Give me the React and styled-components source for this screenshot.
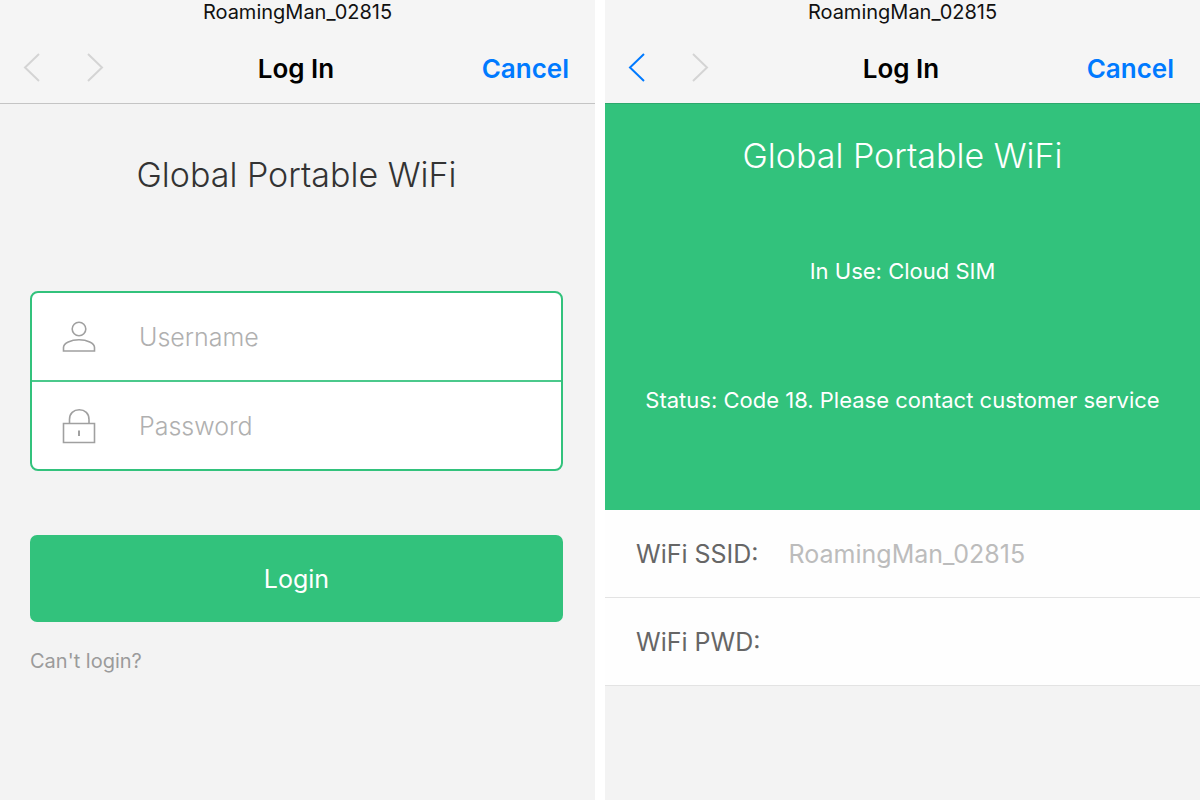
import React from 'react';
import styled, { createGlobalStyle } from 'styled-components';

const GlobalStyle = createGlobalStyle`
  * {
    box-sizing: border-box;
  }

  body {
    margin: 0;
    background-color: #ffffff;
    font-family: Inter, "Liberation Sans", sans-serif;
  }
`;

const Screens = styled.div`
  display: grid;
  grid-template-columns: repeat(2, minmax(0, 1fr));
  gap: 10px;
  min-height: 100vh;
`;

const Screen = styled.section`
  display: flex;
  flex-direction: column;
  background-color: #f3f3f3;
`;

const Header = styled.header`
  background-color: #f5f5f5;
  border-bottom: 1px solid ${({ $line }) => $line};
`;

const NetworkName = styled.div`
  font-size: 20px;
  line-height: 24px;
  padding-bottom: 9px;
  text-align: center;
  color: #111111;
`;

const NavBar = styled.nav`
  display: grid;
  grid-template-columns: 1fr auto 1fr;
  align-items: center;
  height: 70px;
  padding: 0 26px 0 23px;
`;

const Arrows = styled.div`
  display: flex;
  gap: 45px;
`;

const ArrowButton = styled.button`
  display: flex;
  padding: 0;
  border: none;
  background: none;
  color: ${({ $active }) => ($active ? '#007aff' : '#d4d4d4')};
`;

const NavTitle = styled.h1`
  margin: 0;
  padding-top: 2px;
  font-size: 26px;
  font-weight: 600;
  line-height: 32px;
  color: #000000;
`;

const CancelButton = styled.button`
  justify-self: end;
  padding: 2px 0 0;
  border: none;
  background: none;
  font-family: inherit;
  font-size: 26px;
  font-weight: 600;
  line-height: 32px;
  color: #007aff;
`;

const LoginForm = styled.form`
  display: flex;
  flex-direction: column;
  padding: 50px 32px 0 30px;
`;

const Title = styled.h2`
  margin: 0;
  font-size: 34px;
  font-weight: 300;
  line-height: 42px;
  text-align: center;
  color: ${({ $color }) => $color};
`;

const FieldGroup = styled.div`
  margin-top: 95px;
  border: 2px solid #32c27c;
  border-radius: 8px;
  background-color: #ffffff;
  overflow: hidden;
`;

const Field = styled.label`
  display: flex;
  align-items: center;
  gap: 43px;
  height: 87px;
  padding: 0 30px;
  color: #a0a0a0;

  & + & {
    height: 89px;
    border-top: 2px solid #4bc98c;
  }
`;

const FieldInput = styled.input`
  flex: 1;
  min-width: 0;
  padding: 0;
  border: none;
  outline: none;
  background: none;
  font-family: inherit;
  font-size: 25px;
  font-weight: 300;
  line-height: 32px;
  color: #333333;

  &::placeholder {
    color: #b0b0b0;
    opacity: 1;
  }
`;

const LoginButton = styled.button`
  height: 87px;
  margin-top: 64px;
  border: none;
  border-radius: 7px;
  background-color: #32c27c;
  font-family: inherit;
  font-size: 25px;
  font-weight: 400;
  color: #ffffff;
`;

const HelpLink = styled.a`
  align-self: flex-start;
  margin-top: 26px;
  font-size: 20px;
  font-weight: 400;
  line-height: 26px;
  color: #9b9b9b;
  text-decoration: none;
`;

const StatusPanel = styled.div`
  display: flex;
  flex-direction: column;
  align-items: center;
  height: 406px;
  padding: 31px 20px 0;
  background-color: #32c27c;
`;

const StatusText = styled.p`
  margin: ${({ $top }) => $top}px 0 0;
  font-size: 22px;
  font-weight: 400;
  line-height: 28px;
  text-align: center;
  color: #ffffff;
`;

const DetailRow = styled.label`
  display: flex;
  align-items: center;
  gap: 30px;
  height: 88px;
  padding: 0 31px;
  border-bottom: 1px solid #e3e3e3;
  background-color: #fefefe;
  font-size: 25px;
  font-weight: 400;
  line-height: 32px;
  color: #666666;
`;

const DetailInput = styled(FieldInput)`
  font-weight: 400;

  &::placeholder {
    color: #bcbcbc;
  }
`;

const ChevronLeft = () => (
  <svg width="18" height="30" viewBox="0 0 18 30" fill="none" stroke="currentColor" strokeWidth="2">
    <path d="M16 1 L2 14.5 L16 28" />
  </svg>
);

const ChevronRight = () => (
  <svg width="18" height="30" viewBox="0 0 18 30" fill="none" stroke="currentColor" strokeWidth="2">
    <path d="M2 1 L16 14.5 L2 28" />
  </svg>
);

const UserIcon = () => (
  <svg width="34" height="36" viewBox="0 0 34 36" fill="none" stroke="currentColor" strokeWidth="1.6">
    <circle cx="17" cy="10" r="6.8" />
    <path d="M1.5 32 V28.5 C1.5 24 9 20.8 17 20.8 C25 20.8 32.5 24 32.5 28.5 V32 Z" />
  </svg>
);

const LockIcon = () => (
  <svg width="34" height="36" viewBox="0 0 34 36" fill="none" stroke="currentColor" strokeWidth="1.6">
    <path d="M7.5 15.5 V11.5 C7.5 5.5 11.5 1.8 17.3 1.8 C23 1.8 27 5.5 27 11.5 V15.5" />
    <path d="M1.5 15.5 H32.5 V34.5 H1.5 Z" />
    <path d="M17 22.5 V28" strokeWidth="2" />
  </svg>
);

const ScreenHeader = ({ canGoBack, line }) => (
  <Header $line={line}>
    <NetworkName>RoamingMan_02815</NetworkName>
    <NavBar>
      <Arrows>
        <ArrowButton type="button" aria-label="Back" $active={canGoBack} disabled={!canGoBack}>
          <ChevronLeft />
        </ArrowButton>
        <ArrowButton type="button" aria-label="Forward" disabled>
          <ChevronRight />
        </ArrowButton>
      </Arrows>
      <NavTitle>Log In</NavTitle>
      <CancelButton type="button">Cancel</CancelButton>
    </NavBar>
  </Header>
);

const LoginScreen = () => (
  <Screen>
    <ScreenHeader line="#c4c4c4" />
    <LoginForm onSubmit={(e) => e.preventDefault()}>
      <Title $color="#333333">Global Portable WiFi</Title>
      <FieldGroup>
        <Field>
          <UserIcon />
          <FieldInput type="text" aria-label="Username" placeholder="Username" />
        </Field>
        <Field>
          <LockIcon />
          <FieldInput type="password" aria-label="Password" placeholder="Password" />
        </Field>
      </FieldGroup>
      <LoginButton type="submit">Login</LoginButton>
      <HelpLink href="#help">Can't login?</HelpLink>
    </LoginForm>
  </Screen>
);

const StatusScreen = () => (
  <Screen>
    <ScreenHeader canGoBack line="#2ca86c" />
    <StatusPanel>
      <Title $color="#ffffff">Global Portable WiFi</Title>
      <StatusText $top={80}>In Use: Cloud SIM</StatusText>
      <StatusText $top={101}>Status: Code 18. Please contact customer service</StatusText>
    </StatusPanel>
    <DetailRow>
      WiFi SSID:
      <DetailInput type="text" placeholder="RoamingMan_02815" />
    </DetailRow>
    <DetailRow>
      WiFi PWD:
      <DetailInput type="text" />
    </DetailRow>
  </Screen>
);

const App = () => (
  <>
    <GlobalStyle />
    <Screens>
      <LoginScreen />
      <StatusScreen />
    </Screens>
  </>
);

export default App;
